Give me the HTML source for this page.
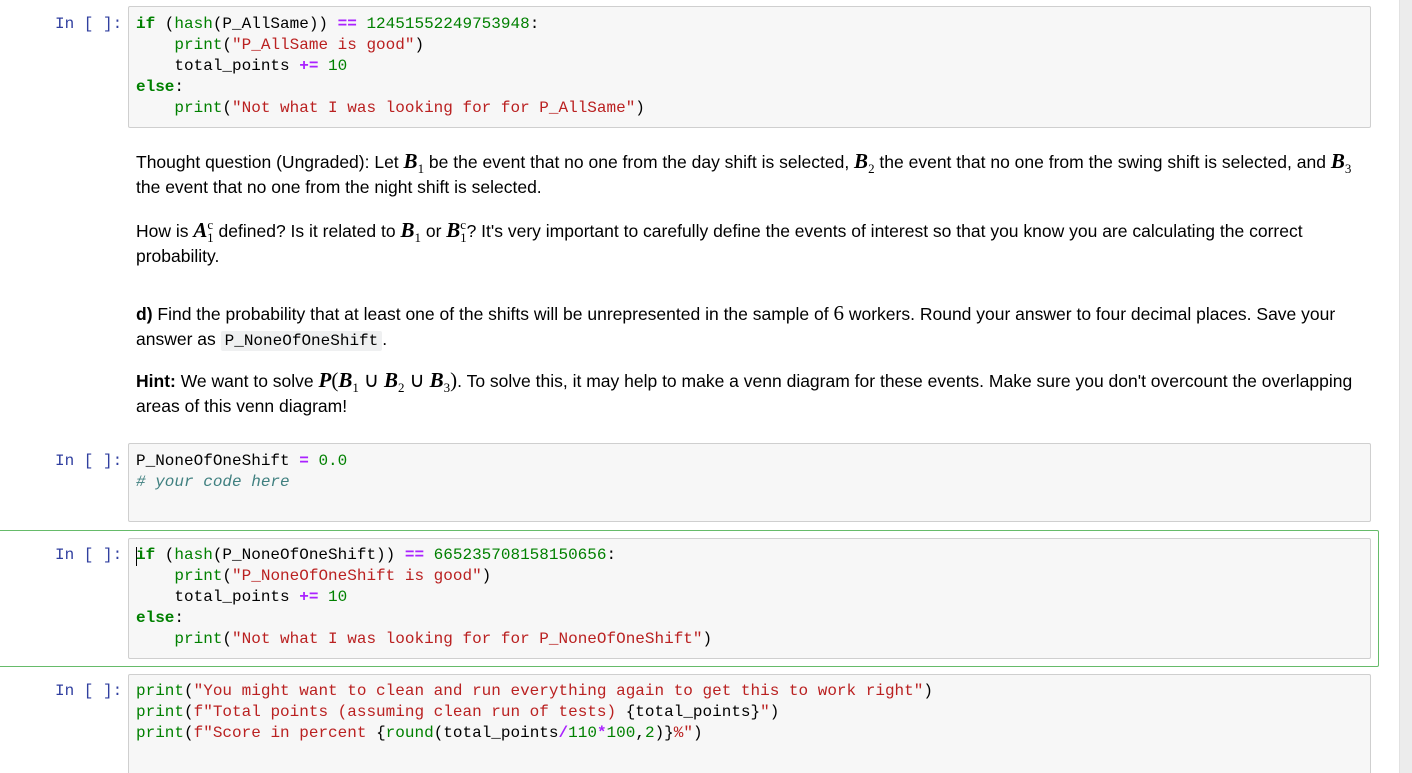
<!DOCTYPE html>
<html><head><meta charset="utf-8"><style>
html,body{margin:0;width:1412px;height:773px;overflow:hidden;}
body{background:#fff;position:relative;font-family:"Liberation Sans",Arial,sans-serif;}
.sb{position:absolute;left:1399px;top:0;width:13px;height:773px;background:#ececec;border-left:1px solid #e2e2e2;}
.box{position:absolute;left:128px;width:1241px;background:#f7f7f7;border:1px solid #cfcfcf;border-radius:2px;}
.code{position:absolute;left:136px;font-family:"Liberation Mono",monospace;font-size:16px;line-height:21px;white-space:pre;color:#000;}
.pr{position:absolute;left:55px;font-family:"Liberation Mono",monospace;font-size:16px;line-height:21px;color:#303f9f;white-space:pre;}
.k{color:#008000;font-weight:bold}.b{color:#008000}.s{color:#ba2121}.n{color:#008000}.o{color:#aa22ff;font-weight:bold}.c{color:#408080;font-style:italic}
.md{position:absolute;left:136px;font-size:17.5px;line-height:25px;height:25px;color:#000;white-space:nowrap;}
.m{font-family:"Liberation Serif",serif;font-style:italic;font-weight:bold;font-size:21px;line-height:0;}
.m sub,.m sup{font-size:13px;font-weight:normal;font-style:normal;line-height:0;}
.mr{font-family:"Liberation Serif",serif;font-size:21px;line-height:0;}
.ic{font-family:"Liberation Mono",monospace;font-size:16px;background:#eff0f1;padding:1px 4px;border-radius:2px;}
.sel{position:absolute;left:0;top:530px;width:1378px;height:135px;border:1px solid #66bb6a;border-left:none;border-radius:0 2px 2px 0;}
</style></head><body>
<div class="sb"></div>

<div class="box" style="top:6px;height:120px"></div>
<div class="pr" style="top:14px">In [ ]:</div>
<div class="code" style="top:14px"><span class="k">if</span> (<span class="b">hash</span>(P_AllSame)) <span class="o">==</span> <span class="n">12451552249753948</span>:
    <span class="b">print</span>(<span class="s">"P_AllSame is good"</span>)
    total_points <span class="o">+=</span> <span class="n">10</span>
<span class="k">else</span>:
    <span class="b">print</span>(<span class="s">"Not what I was looking for for P_AllSame"</span>)</div>

<div class="md" style="top:150px">Thought question (Ungraded): Let <span class="m">B<sub>1</sub></span> be the event that no one from the day shift is selected, <span class="m">B<sub>2</sub></span> the event that no one from the swing shift is selected, and <span class="m">B<sub>3</sub></span></div>
<div class="md" style="top:175px">the event that no one from the night shift is selected.</div>
<div class="md" style="top:219px">How is <span class="m">A<sup>c</sup><sub style="margin-left:-6px">1</sub></span> defined? Is it related to <span class="m">B<sub>1</sub></span> or <span class="m">B<sup>c</sup><sub style="margin-left:-6px">1</sub></span>? It's very important to carefully define the events of interest so that you know you are calculating the correct</div>
<div class="md" style="top:244px">probability.</div>
<div class="md" style="top:302px"><b>d)</b> Find the probability that at least one of the shifts will be unrepresented in the sample of <span class="mr">6</span> workers. Round your answer to four decimal places. Save your</div>
<div class="md" style="top:327px">answer as <span class="ic">P_NoneOfOneShift</span>.</div>
<div class="md" style="top:369px"><b>Hint:</b> We want to solve <span class="m">P</span><span class="mr">(</span><span class="m">B<sub>1</sub></span> <span class="mr">∪</span> <span class="m">B<sub>2</sub></span> <span class="mr">∪</span> <span class="m">B<sub>3</sub></span><span class="mr">)</span>. To solve this, it may help to make a venn diagram for these events. Make sure you don't overcount the overlapping</div>
<div class="md" style="top:394px">areas of this venn diagram!</div>

<div class="box" style="top:443px;height:77px"></div>
<div class="pr" style="top:451px">In [ ]:</div>
<div class="code" style="top:451px">P_NoneOfOneShift <span class="o">=</span> <span class="n">0.0</span>
<span class="c"># your code here</span></div>

<div class="sel"></div>
<div class="box" style="top:538px;height:119px"></div>
<div class="pr" style="top:545px">In [ ]:</div>
<div style="position:absolute;left:136px;top:547px;width:1px;height:19px;background:#000"></div>
<div class="code" style="top:545px"><span class="k">if</span> (<span class="b">hash</span>(P_NoneOfOneShift)) <span class="o">==</span> <span class="n">665235708158150656</span>:
    <span class="b">print</span>(<span class="s">"P_NoneOfOneShift is good"</span>)
    total_points <span class="o">+=</span> <span class="n">10</span>
<span class="k">else</span>:
    <span class="b">print</span>(<span class="s">"Not what I was looking for for P_NoneOfOneShift"</span>)</div>

<div class="box" style="top:674px;height:110px"></div>
<div class="pr" style="top:681px">In [ ]:</div>
<div class="code" style="top:681px"><span class="b">print</span>(<span class="s">"You might want to clean and run everything again to get this to work right"</span>)
<span class="b">print</span>(<span class="s">f"Total points (assuming clean run of tests) </span>{total_points}<span class="s">"</span>)
<span class="b">print</span>(<span class="s">f"Score in percent </span>{<span class="b">round</span>(total_points<span class="o">/</span><span class="n">110</span><span class="o">*</span><span class="n">100</span>,<span class="n">2</span>)}<span class="s">%"</span>)</div>
</body></html>
